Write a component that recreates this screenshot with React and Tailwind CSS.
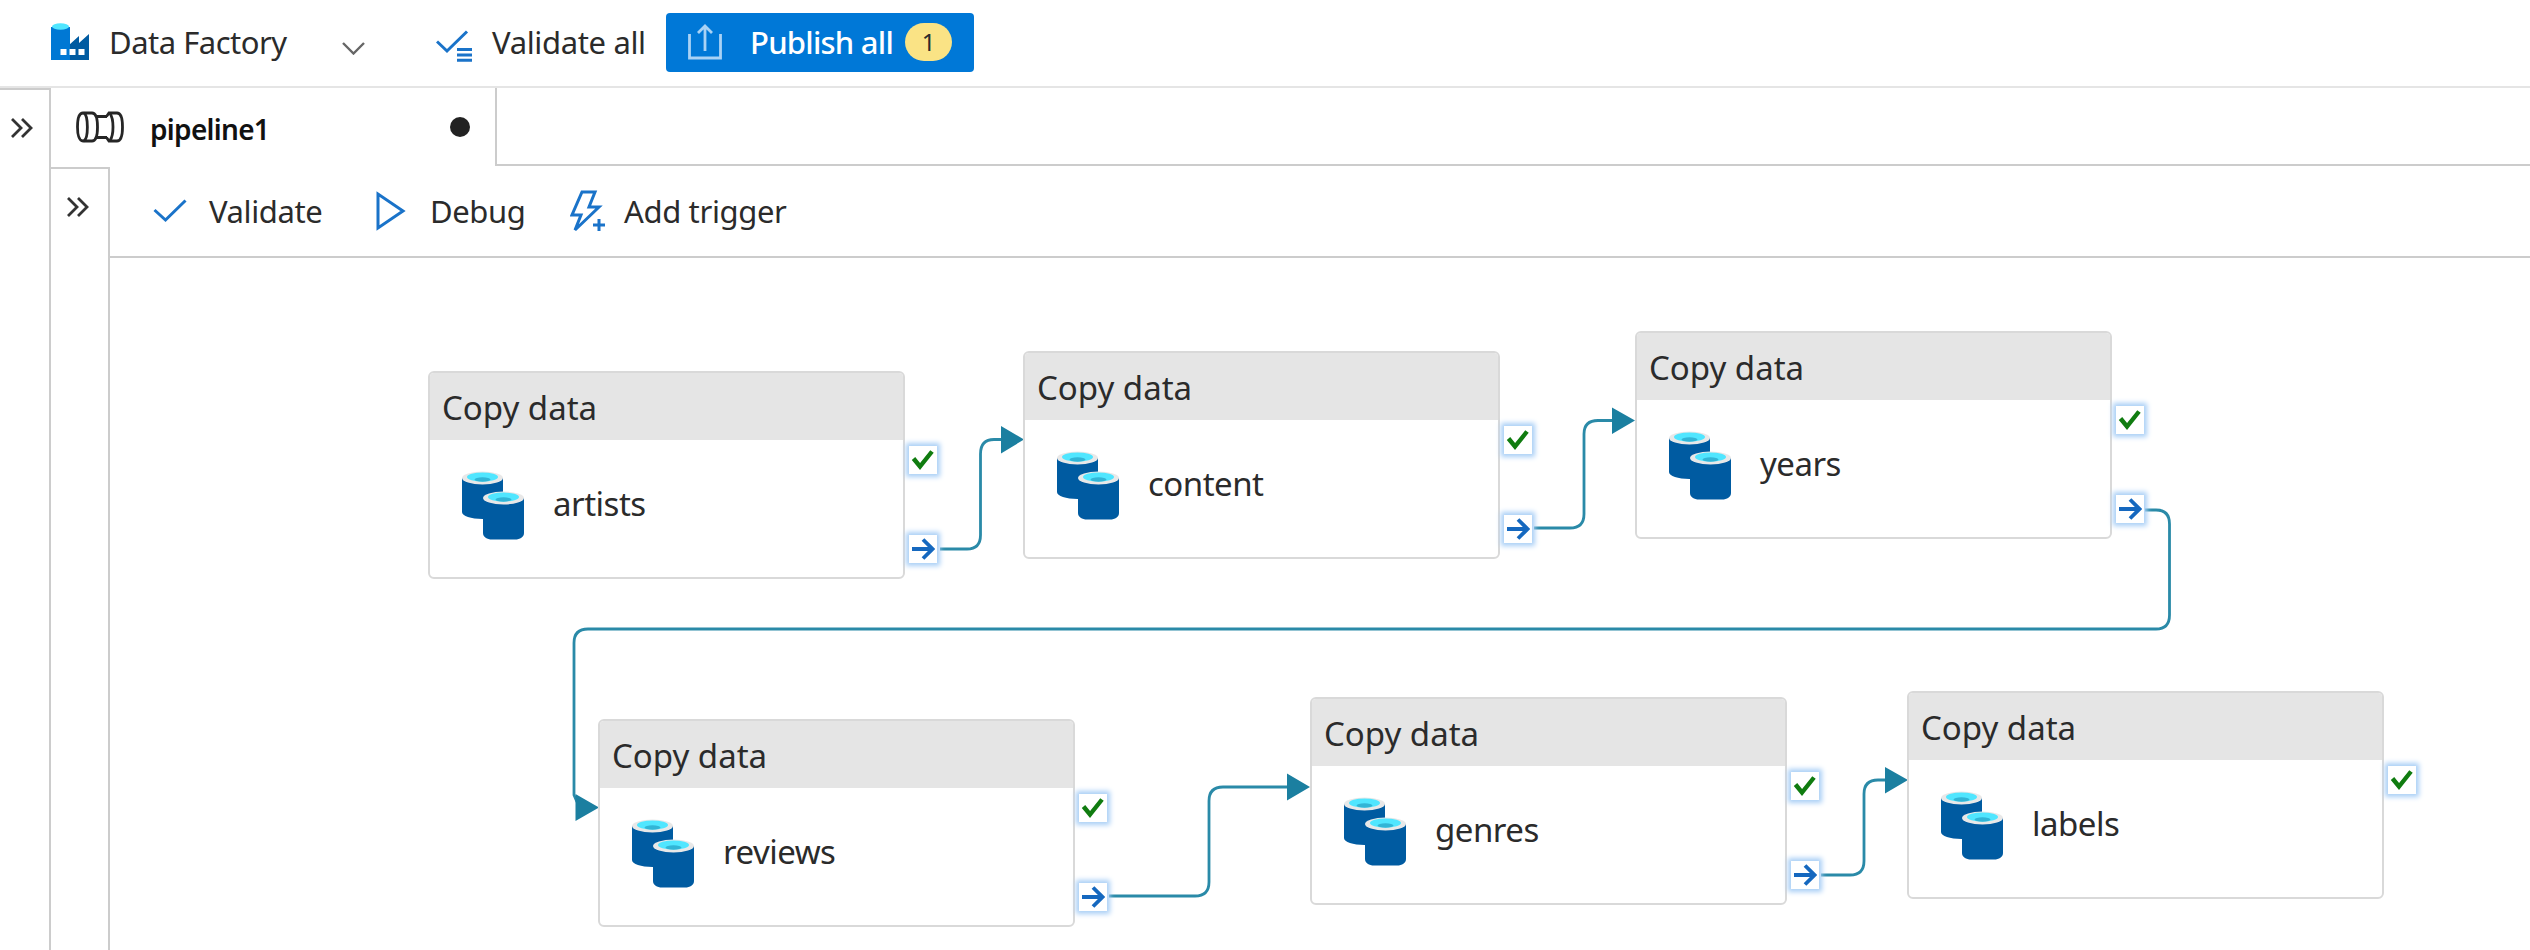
const T = "whitespace-nowrap leading-none text-[#2b2b2b]";

function FactoryIcon() {
  return (
    <svg width="38" height="38" viewBox="0 0 38 38" className="block shrink-0">
      <path d="M18 37V22L28 13V20L38 11V37Z" fill="#005ba1" />
      <path d="M0 4H19V37H0Z" fill="#0078d4" />
      <ellipse cx="9.5" cy="3.5" rx="8.5" ry="3.2" fill="#50e6ff" />
      <path d="M9.5 26h6v6h-6zM18.5 26h6v6h-6zM27.500 26h6v6h-6z" fill="#fff" />
    </svg>
  );
}

function ValidateAllIcon() {
  return (
    <svg width="37" height="32" viewBox="0 0 37 32" className="block shrink-0" fill="none" stroke="#1a73c9" strokeWidth="3">
      <path d="M1 11.5L11 21L31 1.5" />
      <path d="M21 19.5H36M21 25H36M21 30.3H36" />
    </svg>
  );
}

function UploadIcon() {
  return (
    <svg width="34" height="36" viewBox="0 0 34 36" className="block shrink-0" fill="none" stroke="#a9d2f5" strokeWidth="2.8">
      <path d="M1.5 10V34H32.5V10" />
      <path d="M17 27V2M10 9L17 2L24 9" />
    </svg>
  );
}

function PipeIcon() {
  return (
    <svg width="48" height="32" viewBox="0 0 48 32" className="block shrink-0" fill="none" stroke="#262626" strokeWidth="2.8">
      <path d="M7 2H16C20 2 21.500 9 21.500 16S20 30 16 30H7C3 30 1.500 23 1.500 16S3 2 7 2Z" />
      <path d="M8 2C12.500 5 12.500 27 8 30" />
      <path d="M20 5.500H31M20 26.500H31" />
      <path d="M30.500 5.500L33 2H41C45 2 46.500 9 46.500 16S45 30 41 30H33L30.500 26.500" />
      <path d="M34 2.500C38 8 38 24 34 29.500" />
    </svg>
  );
}

function Chevrons() {
  return (
    <svg width="22" height="20" viewBox="0 0 22 20" className="block" fill="none" stroke="#333" strokeWidth="2.8">
      <path d="M1 1L10 10L1 19M11 1L20 10L11 19" />
    </svg>
  );
}

function DbIcon() {
  return (
    <svg width="62" height="69" viewBox="0 0 62 69" className="block shrink-0">
      <path d="M0 7V41C0 45 9 48 20.500 48S41 45 41 41V7Z" fill="#005ba1" />
      <ellipse cx="20.500" cy="7" rx="20.500" ry="6.500" fill="#e8e8e8" />
      <ellipse cx="20.500" cy="6" rx="15.500" ry="4.500" fill="#50e6ff" />
      <ellipse cx="20.500" cy="8.500" rx="8" ry="2.200" fill="#32b5d6" />
      <path d="M21 27V62C21 66 25 68.500 30 68.500H53C58 68.500 62 66 62 62V27Z" fill="#005ba1" />
      <ellipse cx="41.500" cy="27" rx="20.500" ry="6.500" fill="#e8e8e8" />
      <ellipse cx="41.500" cy="26" rx="15.500" ry="4.500" fill="#50e6ff" />
      <ellipse cx="41.500" cy="28.500" rx="8" ry="2.200" fill="#32b5d6" />
    </svg>
  );
}

function Port({ kind }) {
  return (
    <div className="flex h-7 w-7 items-center justify-center bg-white shadow-[0_0_5px_3px_#a9cff6]">
      <svg width="24" height="22" viewBox="0 0 24 22" fill="none" strokeWidth="4.400">
        {kind === "ok" ? (
          <path d="M2.500 9.500L9 17.500L21 2.500" stroke="#107c10" />
        ) : (
          <path d="M1 11H21M12 1.500L21.500 11L12 20.500" stroke="#1568bf" strokeWidth="3.8" />
        )}
      </svg>
    </div>
  );
}

function Activity({ place, name, out = true }) {
  return (
    <div className={"absolute h-[208px] w-[477px] " + place}>
      <div className="flex h-full flex-col overflow-hidden rounded-md border-2 border-[#d9d9d9] bg-white">
        <div className="flex h-[67px] items-center bg-[#e5e5e5] pl-3">
          <span className={T + " pt-[2px] text-[33px]"}>Copy data</span>
        </div>
        <div className="flex items-center pl-8 pt-[31px]">
          <DbIcon />
          <span className={T + " mb-[4px] pl-[29px] text-[33px] tracking-[-0.5px]"}>{name}</span>
        </div>
      </div>
      <div className="absolute left-[481px] top-[75px] flex flex-col gap-[61px]">
        <Port kind="ok" />
        {out && <Port kind="next" />}
      </div>
    </div>
  );
}

export default function App() {
  return (
    <div className="relative flex h-[950px] w-[2530px] flex-col overflow-hidden bg-white font-['Noto_Sans',sans-serif]">
      <header className="flex h-[88px] shrink-0 items-center border-b-2 border-[#e5e5e5] pb-[2px] pl-[51px]">
        <FactoryIcon />
        <span className={T + " ml-[20px] w-[233px] text-[31px] tracking-[-0.5px]"}>Data Factory</span>
        <svg width="23" height="13" viewBox="0 0 23 13" className="mt-[13px] shrink-0" fill="none" stroke="#666" strokeWidth="2.4">
          <path d="M1 1L11.500 11.500L22 1" />
        </svg>
        <div className="ml-[71px] mt-[7px]"><ValidateAllIcon /></div>
        <span className={T + " ml-[19px] w-[174px] text-[31px] tracking-[-0.35px]"}>Validate all</span>
        <div className="flex h-[59px] w-[308px] shrink-0 items-center rounded bg-[#0078d7] pl-[22px]">
          <UploadIcon />
          <span className="ml-[28px] w-[155px] whitespace-nowrap text-[31px] font-medium leading-none tracking-[-0.75px] text-white">Publish all</span>
          <span className="flex h-[38px] w-[47px] items-center justify-center rounded-full bg-[#fae385] text-[24px] leading-none text-[#2b2b2b]">1</span>
        </div>
      </header>
      <div className="flex min-h-0 flex-1">
        <aside className="flex w-[51px] shrink-0 justify-center border-r-2 border-t-2 border-[#ccc] pr-[6px] pt-[28px]">
          <Chevrons />
        </aside>
        <main className="flex min-w-0 flex-1 flex-col">
          <div className="flex h-[78px] shrink-0">
            <div className="flex w-[444px] items-center pl-[25px]">
              <PipeIcon />
              <span className="ml-[26px] whitespace-nowrap pt-[3px] text-[28px] font-semibold leading-none tracking-[-0.7px] text-[#111]">pipeline1</span>
              <span className="ml-auto mr-[25px] h-5 w-5 rounded-full bg-[#222]" />
            </div>
            <div className="flex-1 border-b-2 border-l-2 border-[#ccc]" />
          </div>
          <div className="flex min-h-0 flex-1">
            <aside className="mt-px flex w-[59px] shrink-0 justify-center border-r-2 border-t-2 border-[#ccc] pr-[3px] pt-[28px]">
              <Chevrons />
            </aside>
            <section className="flex flex-1 flex-col">
              <div className="flex h-[92px] shrink-0 items-center border-b-2 border-[#ccc] pl-[43px]">
                <svg width="34" height="24" viewBox="0 0 34 24" fill="none" stroke="#1a73c9" strokeWidth="3">
                  <path d="M1.500 11L12.500 21L32.500 1.500" />
                </svg>
                <span className={T + " ml-[22px] w-[167px] pt-px text-[31px] tracking-[-0.4px]"}>Validate</span>
                <svg width="30" height="40" viewBox="0 0 30 40" fill="none" stroke="#1a73c9" strokeWidth="3">
                  <path d="M2 3V37L27 20Z" />
                </svg>
                <span className={T + " ml-[24px] w-[140px] pt-px text-[31px] tracking-[-0.4px]"}>Debug</span>
                <svg width="36" height="42" viewBox="0 0 36 42" fill="none" stroke="#1a73c9" strokeWidth="3">
                  <path d="M12 2H25L19 17H29L5 40L11 25H2Z" />
                  <path d="M23 35H35M29 29V41" />
                </svg>
                <span className={T + " ml-[18px] pt-px text-[31px] tracking-[-0.35px]"}>Add trigger</span>
              </div>
            </section>
          </div>
        </main>
      </div>
      <svg width="2530" height="950" className="pointer-events-none absolute left-0 top-0" fill="none" stroke="#2a8aa8" strokeWidth="2.8">
        <path d="M940 549H967Q980.500 549 980.500 535V454Q980.500 439.500 994 439.500H1002" />
        <path d="M1534 528H1570Q1584 528 1584 514V434Q1584 420.500 1598 420.500H1613" />
        <path d="M2145 510H2156Q2169.500 510 2169.500 524V615Q2169.500 629 2156 629H588Q574 629 574 643V795L577 802" />
        <path d="M1109 896H1195Q1209 896 1209 882V801Q1209 787 1223 787H1288" />
        <path d="M1821 875H1850Q1864 875 1864 861V794Q1864 780 1878 780H1886" />
        <path d="M1001 426L1024 439.500L1001 453.500ZM1612 407.500L1635 420.500L1612 434ZM575.500 794L599 807.500L575.500 821ZM1287 773.500L1310 787L1287 800.500ZM1885 767L1908 780L1885 793.500Z" fill="#1b7fa0" stroke="none" />
      </svg>
      <Activity place="left-[428px] top-[371px]" name="artists" />
      <Activity place="left-[1023px] top-[351px]" name="content" />
      <Activity place="left-[1635px] top-[331px]" name="years" />
      <Activity place="left-[598px] top-[719px]" name="reviews" />
      <Activity place="left-[1310px] top-[697px]" name="genres" />
      <Activity place="left-[1907px] top-[691px]" name="labels" out={false} />
    </div>
  );
}
